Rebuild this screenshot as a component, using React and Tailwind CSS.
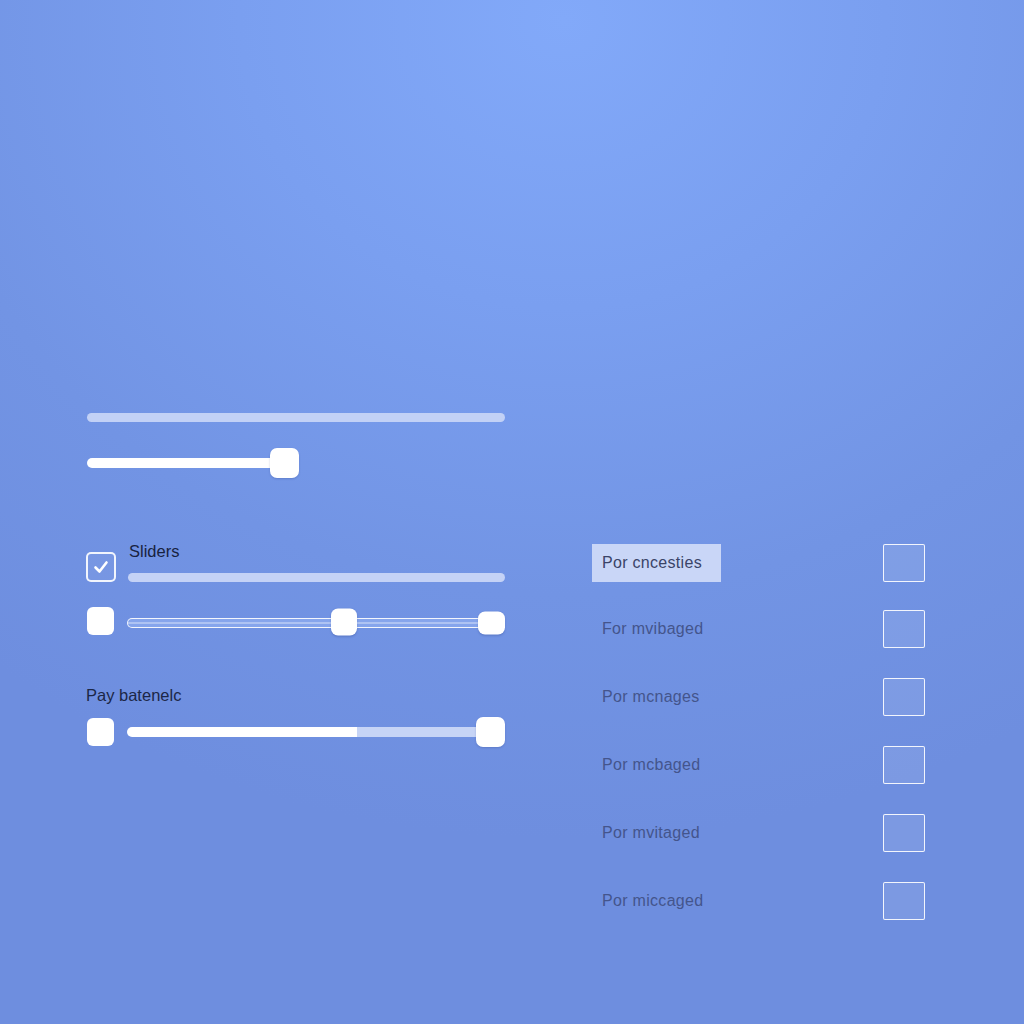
import React from "react";

const font = { fontFamily: '"Liberation Sans", Arial, sans-serif' };

function Thumb({ className = "" }) {
  return (
    <div
      className={`absolute top-1/2 -translate-y-1/2 rounded-[7px] bg-white shadow-[0_1px_2px_rgba(40,60,130,0.25)] ${className}`}
    />
  );
}

function Square() {
  return <div className="h-[28px] w-[27px] shrink-0 rounded-[6px] bg-white" />;
}

function CheckedBox() {
  return (
    <div className="-ml-[1px] flex h-[30px] w-[30px] shrink-0 items-center justify-center rounded-[5px] border-2 border-white/90 bg-white/5">
      <svg width="18" height="18" viewBox="0 0 18 18" fill="none">
        <polyline
          points="3.5,9.5 7.5,13.5 14.5,4.5"
          stroke="white"
          strokeWidth="2.6"
          strokeLinecap="round"
          strokeLinejoin="round"
        />
      </svg>
    </div>
  );
}

const options = [
  { label: "Por cncesties", active: true },
  { label: "For mvibaged" },
  { label: "Por mcnages" },
  { label: "Por mcbaged" },
  { label: "Por mvitaged" },
  { label: "Por miccaged" },
];

export default function App() {
  return (
    <div
      style={font}
      className="h-[1024px] w-[1024px] overflow-hidden bg-[radial-gradient(ellipse_90%_80%_at_55%_2%,#82a9f9_0%,#7a9ff0_35%,#7294e4_70%,#6e8edf_100%)] pl-[87px] pt-[413px]"
    >
      {/* top sliders */}
      <div className="w-[418px]">
        <div className="h-[9px] w-full rounded-full bg-[#c2d1f6]" />
        <div className="relative mt-[26px] h-[30px] w-[212px]">
          <div className="absolute left-0 top-1/2 h-[10px] w-[200px] -translate-y-1/2 rounded-full bg-white" />
          <Thumb className="right-0 h-[30px] w-[29px]" />
        </div>
      </div>

      <div className="mt-[64px] flex">
        {/* left controls */}
        <div className="w-[418px]">
          <div className="flex items-end gap-[12px]">
            <CheckedBox />
            <div className="flex flex-1 flex-col">
              <span className="pl-[1px] text-[16.5px] leading-[18px] text-[#18223f]">Sliders</span>
              <div className="mt-[13px] h-[9px] w-full rounded-full bg-[#c4d2f6]" />
            </div>
          </div>

          <div className="mt-[24px] flex items-center gap-[13px]">
            <Square />
            <div className="relative h-[30px] flex-1">
              <div className="absolute left-0 right-0 top-1/2 mt-[2px] h-[10px] -translate-y-1/2 rounded-full border-[1.5px] border-white/90 bg-[#86a5ec]" />
              <div className="absolute left-[1px] right-[1px] top-1/2 mt-[2px] h-[2px] -translate-y-1/2 bg-[#c9d7f8]/60" />
              <Thumb className="left-[204px] mt-[1px] h-[27px] w-[26px]" />
              <Thumb className="right-0 mt-[2px] h-[23px] w-[27px]" />
            </div>
          </div>

          <div className="-ml-[1px] mt-[50px] text-[16.5px] leading-[18px] text-[#1c2747]">Pay batenelc</div>

          <div className="mt-[13px] flex items-center gap-[13px]">
            <Square />
            <div className="relative h-[30px] flex-1">
              <div className="absolute left-0 right-[24px] top-1/2 flex h-[10px] -translate-y-1/2 overflow-hidden rounded-full">
                <div className="h-full w-[230px] bg-white" />
                <div className="h-full flex-1 bg-[#c6d4f6]" />
              </div>
              <Thumb className="right-0 h-[30px] w-[29px]" />
            </div>
          </div>
        </div>

        {/* right option list */}
        <div className="ml-[87px] mt-[2px] flex w-[333px] flex-col gap-[30px]">
          {options.map((o) => (
            <div
              key={o.label}
              className={`flex h-[38px] items-center justify-between ${o.active ? "-mb-[2px]" : ""}`}
            >
              <div
                className={`flex h-[38px] items-center px-[10px] text-[16px] tracking-[0.3px] ${
                  o.active ? "w-[129px] bg-[#c9d6f7] text-[#3a4468]" : "text-[#44558c]"
                }`}
              >
                {o.label}
              </div>
              <div className="h-[38px] w-[42px] rounded-[2px] border-[1.5px] border-white/90 bg-white/10" />
            </div>
          ))}
        </div>
      </div>
    </div>
  );
}
